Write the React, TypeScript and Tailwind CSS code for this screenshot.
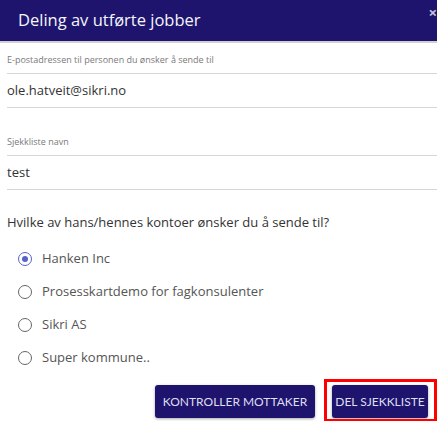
import { useState } from "react";

const offices = [
  "Hanken Inc",
  "Prosesskartdemo for fagkonsulenter",
  "Sikri AS",
  "Super kommune..",
];

function Field({ label, value, top }: { label: string; value: string; top: string }) {
  return (
    <div className={top}>
      <div className="h-[12px] text-[9px] leading-[12px] text-[#7a7a7a]">{label}</div>
      <div className="mt-[7px] flex h-[35px] items-center border-y border-[#d6d6d6] text-[13px] text-[#333]">
        {value}
      </div>
    </div>
  );
}

export default function App() {
  const [selected, setSelected] = useState(0);

  return (
    <div className="h-[421px] w-[437px] overflow-hidden bg-white font-['Open_Sans',sans-serif]">
      <div className="relative flex h-[41px] items-center bg-[#1e146e] pl-[18px] text-[16.5px] text-[#f4f4fa]">
        Deling av utførte jobber
        <span className="absolute right-0 top-[2px] text-[15px] font-bold leading-[20px] text-[#c4c4dc]">×</span>
      </div>
      <div className="h-[2px] bg-[#d0d0d0]" />

      <div className="pl-[7px]">
        <Field
          top="pt-[11px]"
          label="E-postadressen til personen du ønsker å sende til"
          value="ole.hatveit@sikri.no"
        />
        <Field top="mt-[28px]" label="Sjekkliste navn" value="test" />

        <p className="mt-[23px] text-[13px] leading-[18px] text-[#333]">
          Hvilke av hans/hennes kontoer ønsker du å sende til?
        </p>

        <div className="mt-[11px]">
          {offices.map((o, i) => (
            <label
              key={o}
              className="flex h-[33px] cursor-pointer items-center gap-[10px] pl-[11px] text-[13px] text-[#555]"
              onClick={() => setSelected(i)}
            >
              <span
                className={`grid h-[14px] w-[14px] place-items-center rounded-full border ${
                  i === selected ? "border-[#5563c9]" : "border-[#666]"
                }`}
              >
                {i === selected && <span className="h-[6px] w-[6px] rounded-full bg-[#5563c9]" />}
              </span>
              {o}
            </label>
          ))}
        </div>
      </div>

      <div className="mt-[11px] flex justify-end gap-[17px] pr-[9px] font-['Lato',sans-serif]">
        <button className="h-[33px] w-[160px] whitespace-nowrap rounded-[3px] bg-[#1e146e] text-[12px] text-[#dedef0] shadow-[0_1px_3px_rgba(0,0,0,0.35)]">
          KONTROLLER MOTTAKER
        </button>
        <div className="relative">
          <button className="h-[33px] w-[96px] whitespace-nowrap rounded-[3px] bg-[#1e146e] text-[12px] text-[#dedef0] shadow-[0_1px_3px_rgba(0,0,0,0.35)]">
            DEL SJEKKLISTE
          </button>
          <span className="pointer-events-none absolute -left-[8px] -top-[6px] h-[43px] w-[113px] border-[3px] border-[#f00]" />
        </div>
      </div>
    </div>
  );
}
